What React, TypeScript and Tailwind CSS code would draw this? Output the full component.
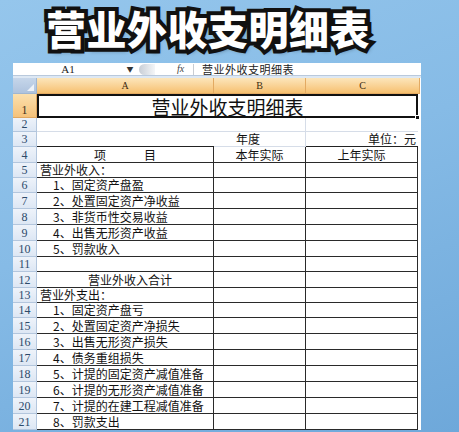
import React from "react";

const CJK = "font-['SimSun','Noto_Sans_CJK_SC',sans-serif]";

type Row = {
  h: number;
  a?: React.ReactNode;
  aAlign?: "left" | "center" | "item";
  table?: boolean;
};

const rows: Row[] = [
  { h: 24 },
  { h: 14 },
  { h: 15 },
  { h: 16, table: true },
  { h: 15, a: "营业外收入：", table: true },
  { h: 15, a: "1、固定资产盘盈", aAlign: "item", table: true },
  { h: 16, a: "2、处置固定资产净收益", aAlign: "item", table: true },
  { h: 16, a: "3、非货币性交易收益", aAlign: "item", table: true },
  { h: 16, a: "4、出售无形资产收益", aAlign: "item", table: true },
  { h: 16, a: "5、罚款收入", aAlign: "item", table: true },
  { h: 15, table: true },
  { h: 16, a: "营业外收入合计", aAlign: "center", table: true },
  { h: 15, a: "营业外支出：", table: true },
  { h: 15, a: "1、固定资产盘亏", aAlign: "item", table: true },
  { h: 16, a: "2、处置固定资产净损失", aAlign: "item", table: true },
  { h: 16, a: "3、出售无形资产损失", aAlign: "item", table: true },
  { h: 16, a: "4、债务重组损失", aAlign: "item", table: true },
  { h: 16, a: "5、计提的固定资产减值准备", aAlign: "item", table: true },
  { h: 16, a: "6、计提的无形资产减值准备", aAlign: "item", table: true },
  { h: 16, a: "7、计提的在建工程减值准备", aAlign: "item", table: true },
  { h: 16, a: "8、罚款支出", aAlign: "item", table: true },
];

function RowHeader({ n, h }: { n: number; h: number }) {
  const sel = n === 1;
  return (
    <div
      style={{ height: h }}
      className={`w-[24px] shrink-0 flex items-end justify-center text-[12px] leading-none border-b border-r ${
        sel
          ? "bg-gradient-to-b from-[#fbe0ad] to-[#f5c27a] border-[#e0a860] text-[#3b3020]"
          : "bg-gradient-to-b from-[#eef3fa] to-[#dde7f4] border-[#b3c6dd] text-[#2d4a6a]"
      } font-['Liberation_Serif','Noto_Sans_CJK_SC',serif]`}
    >
      <span className="mb-[1px]">{n}</span>
    </div>
  );
}

export default function App() {
  return (
    <div className="relative w-[459px] h-[432px] overflow-hidden bg-[linear-gradient(160deg,#95c6ec_0%,#86bbe6_45%,#6ea8da_100%)]">
      {/* Title */}
      <div className="h-[63px] pl-[46px] pt-[5px]">
        <div className="relative inline-block text-[40px] leading-[47px] font-black tracking-[0.5px] font-['Noto_Sans_CJK_SC',sans-serif]">
          <span
            aria-hidden
            className="text-black [-webkit-text-stroke:8px_#111] [text-shadow:2px_3px_4px_rgba(0,0,0,0.45)]"
          >
            营业外收支明细表
          </span>
          <span className="absolute left-0 top-0 text-white">营业外收支明细表</span>
        </div>
      </div>

      {/* Sheet */}
      <div className="ml-[13px] w-[408px] flex flex-col bg-white">
        {/* formula bar */}
        <div className={`h-[12px] flex items-center text-[11px] leading-none text-[#222] bg-white ${CJK}`}>
          <div className="w-[110px] text-center font-['Liberation_Serif',serif]">A1</div>
          <div className="w-[14px] text-[7px] text-[#333] text-center">▼</div>
          <div className="w-[40px] h-[12px] relative">
            <div className="absolute left-[2px] top-[1px] w-[16px] h-[11px] rounded-l-full bg-gradient-to-r from-[#c8ced6] to-[#f4f6f8]" />
          </div>
          <div className="w-[16px] text-[10px] italic font-['Liberation_Serif',serif] text-[#444]">fx</div>
          <div className="w-[1px] h-[11px] bg-[#c8ccd2] mr-[8px]" />
          <div className="text-[11px] tracking-[0.5px]">营业外收支明细表</div>
        </div>
        {/* strip */}
        <div className="h-[3px] bg-[#dde8f4] border-t border-[#b9c9dc]" />
        {/* column headers */}
        <div className="h-[16px] flex">
          <div className="w-[24px] relative bg-gradient-to-b from-[#c6d6ea] to-[#aec3de] border-r border-b border-[#9fb6d1]">
            <div className="absolute right-[2px] bottom-[2px] w-0 h-0 border-l-[7px] border-l-transparent border-b-[7px] border-b-[#eef3f9]" />
          </div>
          {[
            ["A", 177],
            ["B", 92],
            ["C", 114],
          ].map(([l, w]) => (
            <div
              key={l as string}
              style={{ width: w as number }}
              className="flex items-center justify-center text-[10px] text-[#3a2a10] font-['Liberation_Serif',serif] bg-gradient-to-b from-[#fce6bb] to-[#f6c06f] border-r border-b border-[#e3aa62]"
            >
              {l}
            </div>
          ))}
        </div>

        {/* rows */}
        {rows.map((r, i) => {
          const n = i + 1;
          if (n === 1) {
            return (
              <div key={n} className="flex">
                <RowHeader n={n} h={r.h} />
                <div
                  style={{ height: r.h }}
                  className={`relative w-[381px] border-2 border-[#111] flex items-center justify-center pt-[2px] text-[19px] text-[#111] ${CJK}`}
                >
                  营业外收支明细表
                  <div className="absolute right-[-4px] bottom-[-4px] w-[5px] h-[5px] bg-[#111] border border-white" />
                </div>
              </div>
            );
          }
          const light = !r.table;
          const hb = light
            ? n === 3
              ? "border-b border-[#222]"
              : "border-b border-[#d6dde8]"
            : "border-b border-[#2a2a2a]";
          const vb = light ? "border-r border-[#d6dde8]" : "border-r border-[#2a2a2a]";
          let aContent: React.ReactNode = r.a;
          let aCls = "justify-start pl-[3px]";
          if (r.aAlign === "item") aCls = "justify-start pl-[16px]";
          if (r.aAlign === "center") aCls = "justify-center pl-[10px]";
          let bContent: React.ReactNode = null;
          let cContent: React.ReactNode = null;
          let bCls = "justify-center";
          let cCls = "justify-center";
          if (n === 3) {
            bContent = "年度";
            bCls = "justify-start pl-[22px]";
            cContent = "单位：元";
            cCls = "justify-end pr-[2px]";
          }
          if (n === 4) {
            aContent = (
              <span className="flex gap-[38px]">
                <span>项</span>
                <span>目</span>
              </span>
            );
            aCls = "justify-center";
            bContent = "本年实际";
            cContent = "上年实际";
          }
          return (
            <div key={n} className="flex">
              <RowHeader n={n} h={r.h} />
              <div
                style={{ height: r.h }}
                className={`w-[177px] flex items-center ${hb} ${light ? "" : "border-r border-[#2a2a2a]"} ${aCls} text-[12px] leading-none text-[#111] whitespace-nowrap ${CJK}`}
              >
                {aContent}
              </div>
              <div
                style={{ height: r.h }}
                className={`w-[92px] flex items-center ${hb} ${vb} ${bCls} text-[12px] leading-none text-[#111] whitespace-nowrap ${CJK}`}
              >
                {bContent}
              </div>
              <div
                style={{ height: r.h }}
                className={`w-[112px] flex items-center ${hb} ${light ? "" : "border-r border-[#2a2a2a]"} ${cCls} text-[12px] leading-none text-[#111] whitespace-nowrap ${CJK}`}
              >
                {cContent}
              </div>
              <div style={{ height: r.h }} className="w-[3px] bg-white" />
            </div>
          );
        })}
      </div>
    </div>
  );
}
